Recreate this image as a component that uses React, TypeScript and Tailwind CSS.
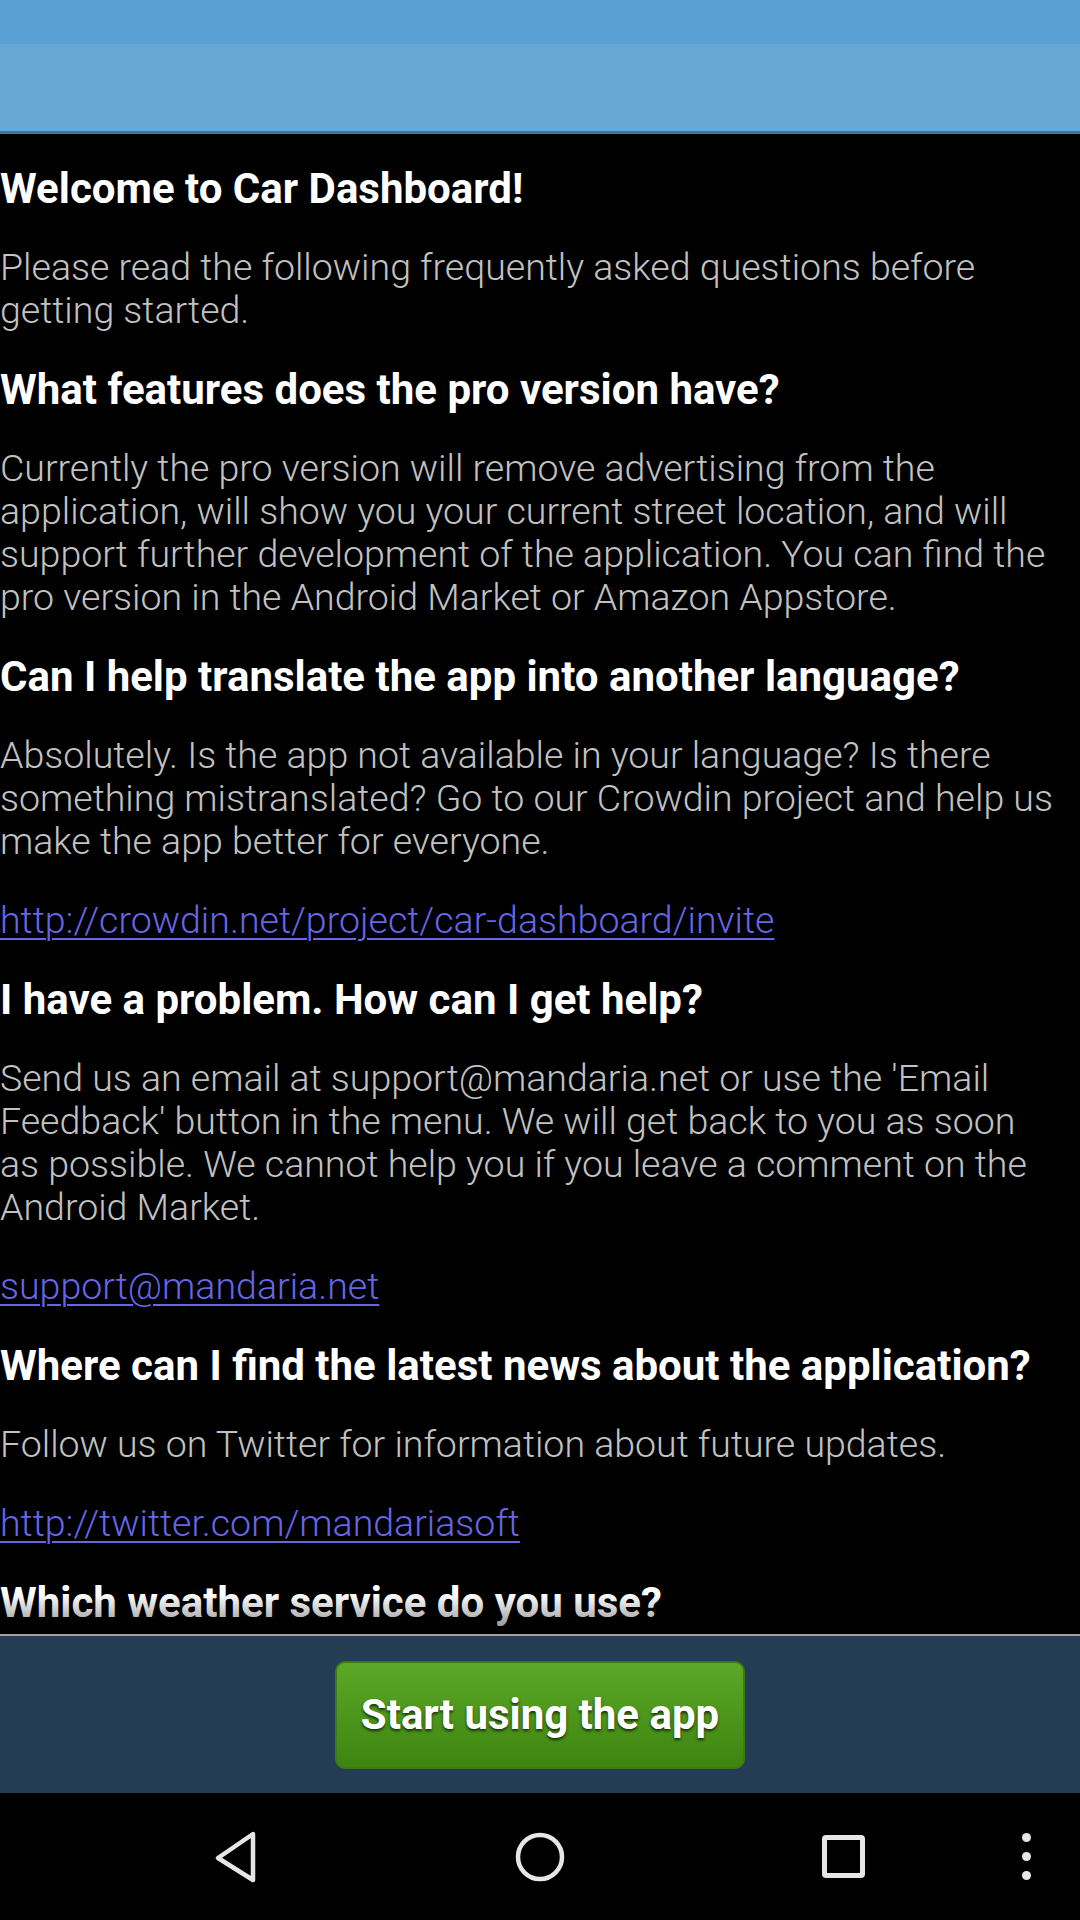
const faq = [
  {
    q: "Welcome to Car Dashboard!",
    a: "Please read the following frequently asked questions before getting started.",
  },
  {
    q: "What features does the pro version have?",
    a: "Currently the pro version will remove advertising from the application, will show you your current street location, and will support further development of the application. You can find the pro version in the Android Market or Amazon Appstore.",
  },
  {
    q: "Can I help translate the app into another language?",
    a: "Absolutely. Is the app not available in your language? Is there something mistranslated? Go to our Crowdin project and help us make the app better for everyone.",
    link: "http://crowdin.net/project/car-dashboard/invite",
  },
  {
    q: "I have a problem. How can I get help?",
    a: "Send us an email at support@mandaria.net or use the 'Email Feedback' button in the menu. We will get back to you as soon as possible. We cannot help you if you leave a comment on the Android Market.",
    link: "support@mandaria.net",
  },
  {
    q: "Where can I find the latest news about the application?",
    a: "Follow us on Twitter for information about future updates.",
    link: "http://twitter.com/mandariasoft",
  },
  {
    q: "Which weather service do you use?",
  },
];

const NavBar = () => (
  <div className="h-[127px] bg-black flex items-center">
    <svg className="ml-[212px]" width="48" height="52" viewBox="0 0 48 52">
      <path d="M41 3 L6 27 L41 49 Z" fill="none" stroke="#e6e6e6" strokeWidth="4.5" strokeLinejoin="round" />
    </svg>
    <svg className="ml-[253px]" width="54" height="54" viewBox="0 0 54 54">
      <circle cx="27" cy="27" r="22" fill="none" stroke="#e6e6e6" strokeWidth="4.5" />
    </svg>
    <div className="ml-[255px] w-[43px] h-[43px] border-[5px] border-[#e6e6e6] rounded-[4px]" />
    <div className="ml-[157px] flex flex-col gap-[10px]">
      <div className="w-[9px] h-[9px] rounded-full bg-[#e6e6e6]" />
      <div className="w-[9px] h-[9px] rounded-full bg-[#e6e6e6]" />
      <div className="w-[9px] h-[9px] rounded-full bg-[#e6e6e6]" />
    </div>
  </div>
);

export default function App() {
  return (
    <div className="w-[1080px] h-[1920px] flex flex-col bg-black" style={{ fontFamily: "Roboto, 'Noto Sans', sans-serif" }}>
      <div className="h-[44px] bg-[#5aa0d4]" />
      <div className="h-[87px] bg-[#69a8d4]" />
      <div className="h-[3px] bg-[#3e76a3]" />

      <div className="relative h-[1500px] overflow-hidden">
        <div className="pt-[33px] pr-[24px] flex flex-col gap-[36px]">
          {faq.map((item) => (
            <div key={item.q} className="flex flex-col gap-[36px]">
              <h2 className="text-[42px] leading-[43px] font-bold text-white">{item.q}</h2>
              {item.a && <p className="text-[37.5px] leading-[43px] font-light text-[#c2c2c2]">{item.a}</p>}
              {item.link && (
                <a className="text-[37.5px] leading-[43px] font-light text-[#6666e6] underline decoration-2 underline-offset-[5px]">
                  {item.link}
                </a>
              )}
            </div>
          ))}
        </div>
        <div className="absolute bottom-0 left-0 right-0 h-[40px] bg-gradient-to-b from-transparent to-black/50" />
      </div>

      <div className="h-[2px] bg-[#a0a4a8]" />
      <div className="h-[157px] bg-[#243d54] flex items-center justify-center">
        <button className="w-[410px] h-[108px] rounded-[10px] border-2 border-[#3b7a14] bg-gradient-to-b from-[#5ca827] to-[#3e8510] text-white text-[42px] font-bold [text-shadow:0_2px_3px_rgba(0,0,0,0.7)]">
          Start using the app
        </button>
      </div>

      <NavBar />
    </div>
  );
}
